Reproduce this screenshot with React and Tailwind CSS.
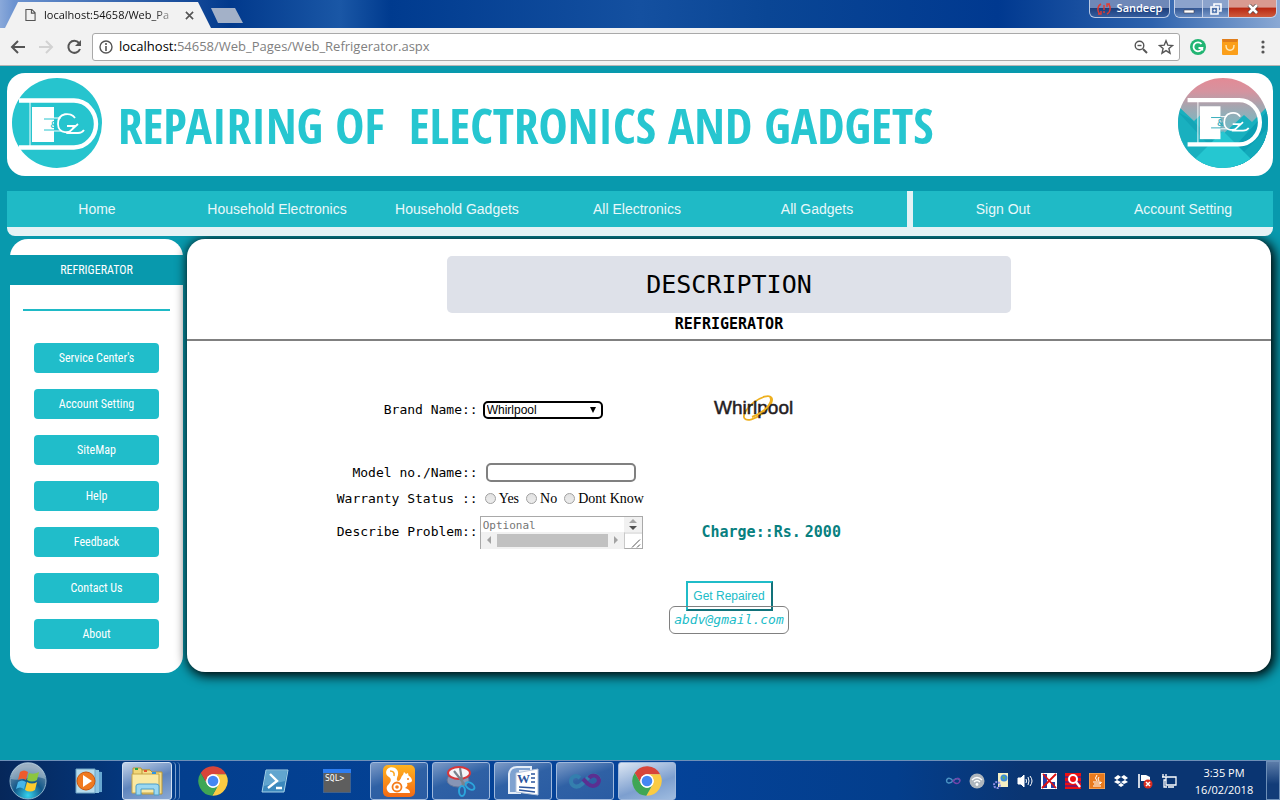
import React from "react";

const MONO = "font-['DejaVu_Sans_Mono',monospace]";
const UI = "font-['Open_Sans','Noto_Sans',sans-serif]";
const NARROW = "font-['Open_Sans_Condensed','DejaVu_Sans_Condensed',sans-serif]";
const SIDE = "font-['Roboto_Condensed','Open_Sans_Condensed','DejaVu_Sans_Condensed',sans-serif]";

function Chrome({ className }) {
  const sector = "M24 14H43.6A22 22 0 0 0 5.54 12.03L15.34 29A10 10 0 0 1 24 14Z";
  return (
    <svg viewBox="0 0 48 48" className={className} aria-hidden="true">
      <circle cx="24" cy="24" r="12" fill="#fff" />
      <path d={sector} fill="#d8453a" />
      <path d={sector} fill="#fbcb43" transform="rotate(120 24 24)" />
      <path d={sector} fill="#3fa655" transform="rotate(240 24 24)" />
      <circle cx="24" cy="24" r="10" fill="#fff" />
      <circle cx="24" cy="24" r="8" fill="#4587f3" />
    </svg>
  );
}

function Infinity({ className }) {
  return (
    <svg viewBox="0 0 32 20" className={className} fill="none" aria-hidden="true">
      <path d="M16 10C12 5 9 4 6 5C2 7 2 13 7 14C12 15 15 11 18 8C22 4 27 4 29 8" stroke="#4a93c4" strokeWidth="3" strokeLinecap="round" />
      <path d="M16 10C20 15 24 16 27 14C31 11 31 7 27 5C23 4 19 7 16 10" stroke="#7443a8" strokeWidth="3" strokeLinecap="round" />
    </svg>
  );
}

function LogoMark({ ground }) {
  return (
    <g>
      <path d="M7 22.5H62A22 23.5 0 0 1 62 69.5H7" fill="none" stroke="#fff" strokeWidth="4.4" />
      <path d="M18 22V69" stroke="#fff" strokeWidth="1" />
      <path d="M20 29H42V64H20Z" fill="#fff" />
      <path d="M32 41H43M32 52H43" stroke={ground} strokeWidth="1" />
      <path d="M42 40H49M42 53H49" stroke="#fff" strokeWidth="1" />
      <text x="38.5" y="50" fontSize="9" fontWeight="700" fill={ground} fontFamily="Lato, sans-serif">&amp;</text>
      <path d="M63 40C59 34 46 34 46 46C46 56 59 57 62 48H55M66 46L56 55H66Q70 55 72 52" fill="none" stroke="#fff" strokeWidth="1.8" />
    </g>
  );
}

function Logo() {
  return (
    <svg viewBox="0 0 90 90" className="size-[90px] shrink-0" role="img" aria-label="Electronics and gadgets">
      <circle cx="45" cy="45" r="45" fill="#26c4ce" />
      <LogoMark ground="#26c4ce" />
    </svg>
  );
}

function SceneLogo() {
  return (
    <svg viewBox="0 0 90 90" className="size-[90px] shrink-0" role="img" aria-label="Electronics and gadgets">
      <defs>
        <linearGradient id="sky" x1="0" y1="0" x2="0" y2="1">
          <stop offset="0" stopColor="#e38a95" />
          <stop offset=".15" stopColor="#d5939f" />
          <stop offset=".32" stopColor="#a4a6b0" />
          <stop offset=".5" stopColor="#7fb6c0" />
        </linearGradient>
        <clipPath id="disc"><circle cx="45" cy="45" r="45" /></clipPath>
      </defs>
      <g clipPath="url(#disc)">
        <path d="M0 0H90V90H0Z" fill="url(#sky)" />
        <path d="M0 28L16 43L28 32L45 56L66 37L74 44L90 28V90H0Z" fill="#19b0bf" />
        <path d="M90 32L48 78L62 90H90Z" fill="#0c9fb4" />
        <path d="M90 50L58 82L66 90H90Z" fill="#12a9ba" />
        <path d="M0 34L52 90H64L14 42Z" fill="#13a5b6" />
        <path d="M45 53L76 84L66 90H24L14 84Z" fill="#25c7d1" />
      </g>
      <g transform="translate(3 1) scale(.94)"><LogoMark ground="#2da9b8" /></g>
    </svg>
  );
}

function BrowserChrome() {
  return (
    <header className={`${UI} shrink-0`}>
      <div className="flex h-7 justify-between bg-[linear-gradient(90deg,#8aa9da_0px,#6c93d0_14px,#01398c_230px,#1a57a6_340px,#003b8f_390px,#1450a0_50%,#0a4695_60%,#003990_78%,#2d62ad_90%,#8ba9d4_100%)]">
        <div className="flex items-start gap-1">
          <div className="ml-[5px] mt-[2px] flex h-[26px] w-[206px] items-center bg-[#f2f2f2] pl-5 pr-4 [clip-path:polygon(0_100%,13px_0,193px_0,100%_100%)]">
            <svg viewBox="0 0 12 14" className="h-[14px] w-[11px] shrink-0" fill="none" stroke="#555" strokeWidth="1.2" aria-hidden="true">
              <path d="M1 1H7.5L11 4.5V13H1ZM7 1V5H11" />
            </svg>
            <span className="ml-2 w-[133px] shrink-0 whitespace-nowrap bg-[linear-gradient(90deg,#111_82%,#d8d8d8)] bg-clip-text text-[11px] text-transparent">localhost:54658/Web_Pa</span>
            <button aria-label="Close tab" className="ml-[6px] flex size-3 shrink-0 items-center justify-center">
              <svg viewBox="0 0 10 10" className="size-[9px]" stroke="#555" strokeWidth="1.8"><path d="M1 1L9 9M9 1L1 9" /></svg>
            </button>
          </div>
          <button aria-label="New tab" className="mt-2 h-[15px] w-8 -ml-1 bg-[#a3b1c8] [clip-path:polygon(0_0,24px_0,100%_100%,7px_100%)]" />
        </div>
        <div className="flex h-[18px] gap-1 pr-[3px]">
          <button className="flex w-[81px] items-center justify-center gap-[6px] rounded-b-md border border-t-0 border-[#b9c9e4] bg-[linear-gradient(#6e88b8_45%,#1d3f7c_50%,#355d9f)] text-[11px] font-semibold text-white">
            <svg viewBox="0 0 14 12" className="h-3 w-[14px]" fill="none" stroke="#e23b32" strokeWidth="1.4" aria-hidden="true">
              <path d="M4 1C0 3 0 9 3 11M1 11H4V8M10 11C14 9 14 3 11 1M13 1H10V4M7 2V7M7 8V10" />
            </svg>
            Sandeep
          </button>
          <div className="flex w-[103px] overflow-hidden rounded-b-md border border-t-0 border-[#c5d1e8]">
            <button aria-label="Minimize" className="flex w-7 items-center justify-center border-r border-[#c5d1e8] bg-[linear-gradient(#8ba3cc_45%,#365a96_50%,#6388bf)]">
              <svg viewBox="0 0 12 10" className="h-[10px] w-3"><path d="M1 6H11V9H1Z" fill="#fff" stroke="#445" strokeWidth=".6" /></svg>
            </button>
            <button aria-label="Restore" className="flex w-[26px] items-center justify-center border-r border-[#c5d1e8] bg-[linear-gradient(#8ba3cc_45%,#4a6da5_50%,#7898c9)]">
              <svg viewBox="0 0 12 12" className="size-3" fill="none" stroke="#fff" strokeWidth="1.6"><path d="M1 4H8V11H1ZM4 3V1H11V8H9" /><path d="M4 7H5V8H4Z" strokeWidth="1" /></svg>
            </button>
            <button aria-label="Close window" className="flex flex-1 items-center justify-center bg-[linear-gradient(#d99a90_40%,#b92a14_50%,#cf5b3c)]">
              <svg viewBox="0 0 12 10" className="h-[10px] w-3" fill="none"><path d="M2 1L10 9M10 1L2 9" stroke="#544" strokeWidth="4" /><path d="M2 1L10 9M10 1L2 9" stroke="#fff" strokeWidth="2.6" /></svg>
            </button>
          </div>
        </div>
      </div>
      <div className="flex h-[38px] items-center border-b border-[#b6b4b4] bg-[#f2f2f2] pl-2 pr-[11px]">
        <button aria-label="Back" className="mr-2"><svg viewBox="0 0 20 20" className="size-5" fill="none" stroke="#555" strokeWidth="2"><path d="M17 10H4M10 4L4 10L10 16" /></svg></button>
        <button aria-label="Forward" className="mr-2"><svg viewBox="0 0 20 20" className="size-5" fill="none" stroke="#d2d2d2" strokeWidth="2"><path d="M3 10H16M10 4L16 10L10 16" /></svg></button>
        <button aria-label="Reload" className="mr-2"><svg viewBox="0 0 20 20" className="size-5" fill="none" stroke="#555" strokeWidth="2"><path d="M15 6A6 6 0 1 0 16 12" /><path d="M17 3V9H11Z" fill="#555" stroke="none" /></svg></button>
        <div className="flex h-7 flex-1 items-center rounded-[3px] border border-[#a9a9a9] bg-white pl-[6px] pr-[5px]">
          <svg viewBox="0 0 14 14" className="size-[14px] shrink-0" fill="none" stroke="#555" strokeWidth="1.4" aria-hidden="true"><circle cx="7" cy="7" r="6" /><path d="M7 6V11M7 3V5" strokeWidth="1.6" /></svg>
          <p className="ml-[6px] flex-1 whitespace-nowrap text-[13px] text-[#808080]"><span className="text-black">localhost:</span>54658/Web_Pages/Web_Refrigerator.aspx</p>
          <button aria-label="Zoom" className="mr-[10px]"><svg viewBox="0 0 14 14" className="size-[14px]" fill="none" stroke="#555" strokeWidth="1.4"><circle cx="5.5" cy="5.5" r="4.3" /><path d="M9 9L13 13" strokeWidth="2" /><path d="M3.5 5.5H7.5" /></svg></button>
          <button aria-label="Bookmark"><svg viewBox="0 0 16 16" className="size-4" fill="none" stroke="#555" strokeWidth="1.4"><path d="M8 1.8L9.8 6.2L14.5 6.5L10.9 9.5L12 14.2L8 11.6L4 14.2L5.1 9.5L1.5 6.5L6.2 6.2Z" /></svg></button>
        </div>
        <button aria-label="Grammar extension" className="ml-[10px]">
          <svg viewBox="0 0 16 16" className="size-4"><circle cx="8" cy="8" r="8" fill="#22b573" /><path d="M11.5 5A4.5 4.5 0 1 0 12.3 9H8.5M12.3 9V11.5" fill="none" stroke="#fff" strokeWidth="1.8" /></svg>
        </button>
        <button aria-label="Shopping extension" className="ml-4">
          <svg viewBox="0 0 16 16" className="size-4"><rect width="16" height="16" rx="1" fill="#fb9f1a" /><path d="M0 0H16L15 3H1Z" fill="#e07d1b" /><path d="M4 6C4 13 12 13 12 6" fill="none" stroke="#ffe9b8" strokeWidth="1.4" /></svg>
        </button>
        <button aria-label="Menu" className="ml-[19px]"><svg viewBox="0 0 4 14" className="h-[14px] w-3" fill="#555"><circle cx="2" cy="2" r="1.6" /><circle cx="2" cy="7" r="1.6" /><circle cx="2" cy="12" r="1.6" /></svg></button>
      </div>
    </header>
  );
}

const navLink = "flex flex-1 items-center justify-center whitespace-nowrap";

function SiteNav() {
  return (
    <nav className="relative z-10 mt-[15px] rounded-b-lg bg-[#e4f2f5] pb-[9px] font-['Liberation_Sans',Arial,sans-serif] text-[14px] text-[#e8f8fa]">
      <div className="flex h-9 gap-[6px]">
        <div className="flex flex-[5] bg-[#1fbac6]">
          {["Home", "Household Electronics", "Household Gadgets", "All Electronics", "All Gadgets"].map((t) => (
            <a key={t} href="#" className={navLink}>{t}</a>
          ))}
        </div>
        <div className="flex flex-[2] bg-[#1fbac6]">
          {["Sign Out", "Account Setting"].map((t) => (
            <a key={t} href="#" className={navLink}>{t}</a>
          ))}
        </div>
      </div>
    </nav>
  );
}

function Sidebar() {
  return (
    <aside className={`${SIDE} w-[173px] shrink-0 rounded-[18px] bg-white pb-6 pt-4 text-[12px] text-white`}>
      <h2 className="flex h-[30px] items-center justify-center bg-[#0899ad]">REFRIGERATOR</h2>
      <hr className="mx-[13px] mt-6 border-t-2 border-[#1fbac6]" />
      <div className="mx-6 mt-8 flex flex-col gap-4">
        {["Service Center's", "Account Setting", "SiteMap", "Help", "Feedback", "Contact Us", "About"].map((t) => (
          <button key={t} className="h-[30px] rounded-sm bg-[#20bdca]">{t}</button>
        ))}
      </div>
    </aside>
  );
}

function WhirlpoolLogo() {
  return (
    <svg viewBox="0 2 84 30" className="h-[30px] w-[84px]" role="img" aria-label="Whirlpool">
      <ellipse cx="46" cy="15" rx="17" ry="7" transform="rotate(-38 46 15)" fill="none" stroke="#eeb01f" strokeWidth="1.8" />
      <text x="2" y="21" fontSize="19" fill="#25201f" stroke="#25201f" strokeWidth=".5" fontFamily="Liberation Sans, Arial, sans-serif">Whirlpool</text>
      <path d="M40 24C52 20 62 9 58 4" fill="none" stroke="#eeb01f" strokeWidth="2" />
    </svg>
  );
}

function ProblemBox() {
  return (
    <div className="grid h-[33px] w-[163px] grid-cols-[1fr_18px] grid-rows-[1fr_17px] border border-[#a9a9a9]">
      <textarea id="problem" placeholder="Optional" className={`${MONO} resize-none overflow-hidden pl-[2px] pt-[2px] text-[11px] leading-[14px] outline-none placeholder:text-[#757575]`} />
      <svg viewBox="0 0 18 15" className="h-[15px] w-[18px] bg-[#f1f1f1]" aria-hidden="true"><path d="M5 6L9 2L13 6Z" fill="#a3a3a3" /><path d="M5 9L9 13L13 9Z" fill="#505050" /></svg>
      <div className="flex items-center bg-[#f1f1f1]">
        <svg viewBox="0 0 16 16" className="size-4" aria-hidden="true"><path d="M10 4V12L6 8Z" fill="#a3a3a3" /></svg>
        <div className="h-[13px] flex-1 bg-[#c1c1c1]" />
        <svg viewBox="0 0 16 16" className="size-4" aria-hidden="true"><path d="M6 4V12L10 8Z" fill="#a3a3a3" /></svg>
      </div>
      <svg viewBox="0 0 18 16" className="h-[17px] w-[18px]" fill="none" aria-hidden="true"><path d="M.5 0V16M0 .5H18" stroke="#c9c9c9" /><path d="M8 15L16 7M13 15L16 12" stroke="#555" /></svg>
    </div>
  );
}

const row = "grid grid-cols-[27%_20%_1fr] items-center";
const label = "pr-[2px] text-right whitespace-nowrap";

function RepairForm() {
  return (
    <form onSubmit={(e) => e.preventDefault()} className={`${MONO} text-[13px] text-black`}>
      <div className={`${row} mt-[54px]`}>
        <label htmlFor="brand" className={label}>Brand Name::</label>
        <div className="relative ml-[3px] w-[120px] font-['Liberation_Sans',Arial,sans-serif]">
          <select id="brand" className="block h-[18px] w-full appearance-none rounded-[5px] border-2 border-black bg-white pl-[2px] text-[12px] leading-[14px]">
            <option>Whirlpool</option>
          </select>
          <svg viewBox="0 0 8 8" className="pointer-events-none absolute right-[6px] top-[5px] size-2" aria-hidden="true"><path d="M1 1H7L4 7Z" /></svg>
        </div>
        <div className="pl-4"><WhirlpoolLogo /></div>
      </div>
      <div className={`${row} mt-[38px]`}>
        <label htmlFor="model" className={label}>Model no./Name::</label>
        <input id="model" type="text" className="ml-[6px] h-[19px] w-[150px] rounded-[5px] border-2 border-[#808080] bg-white px-1 outline-none" />
      </div>
      <div className={`${row} mt-[6px]`}>
        <span className={label} id="warranty">Warranty Status ::</span>
        <div role="radiogroup" aria-labelledby="warranty" className="ml-[5px] flex items-center gap-[7px] whitespace-nowrap font-['Liberation_Serif',serif] text-[14px] leading-5">
          {["Yes", "No", "Dont Know"].map((t) => (
            <label key={t} className="flex items-center gap-[3px]">
              <input type="radio" name="warranty" className="size-[11px] appearance-none rounded-full border border-[#a0a0a0] bg-[linear-gradient(#e2e2e2,#ececec)] checked:bg-[#555]" />
              {t}
            </label>
          ))}
        </div>
      </div>
      <div className={`${row} mt-[7px]`}>
        <label htmlFor="problem" className={label}>Describe Problem::</label>
        <ProblemBox />
        <p className="flex gap-1 pl-[5px] text-[15px] font-bold text-[#08807f]"><span>Charge::Rs.</span><span>2000</span></p>
      </div>
      <div className="mt-8 flex flex-col items-center">
        <button className="h-[30px] w-[87px] whitespace-nowrap border-2 border-b-[#12727a] border-l-[#20bcc8] border-r-[#12727a] border-t-[#20bcc8] font-['Liberation_Sans',Arial,sans-serif] text-[12px] text-[#20bcc8]">Get Repaired</button>
        <p className="-mt-[5px] flex h-7 w-[120px] items-center justify-center rounded-md border border-[#808080] italic text-[#20bcc8]">abdv@gmail.com</p>
      </div>
    </form>
  );
}

function TaskButton({ label: name, active, children }) {
  return (
    <button aria-label={name} className={`flex h-[38px] w-[58px] items-center justify-center rounded-[3px] border border-[#9fb9dd] ${active ? "bg-[linear-gradient(160deg,#dce6f3,#7d9fcf_60%,#9fbce0)]" : "bg-[linear-gradient(160deg,#7d9bc7,#2f61a5_45%,#2a5ca3)]"}`}>
      {children}
    </button>
  );
}

function PinButton({ label: name, children }) {
  return <button aria-label={name} className="flex h-[38px] w-[58px] items-center justify-center">{children}</button>;
}

function Taskbar() {
  return (
    <footer className={`${UI} flex h-10 shrink-0 items-center justify-between border-t border-[#6d8fb8] bg-[linear-gradient(90deg,#06275a_0,#033f8e_14%,#04439a_50%,#033e8c_70%,#0a3572_80%,#0a3572_100%)] text-white`}>
      <div className="flex items-center gap-1">
        <button aria-label="Start" className="flex h-[38px] w-14 items-center justify-center">
          <svg viewBox="0 0 38 38" className="size-[38px]">
            <defs><radialGradient id="orb" cx=".5" cy=".9" r=".8"><stop offset="0" stopColor="#35d3ee" /><stop offset=".5" stopColor="#12588a" /><stop offset="1" stopColor="#708da8" /></radialGradient></defs>
            <circle cx="19" cy="19" r="18" fill="url(#orb)" stroke="#8eb3cc" />
            <path d="M2 17A17 17 0 0 1 36 17C26 12 12 20 2 17Z" fill="#fff" opacity=".3" />
            <path d="M11 10Q15 7 19 10L17 18Q13 15 9 18Z" fill="#ee5b2c" />
            <path d="M20 11Q25 13 30 10L28 18Q23 21 18 18Z" fill="#8cc63f" />
            <path d="M9 20Q13 17 17 20L15 27Q11 24 7 27Z" fill="#48b5e8" />
            <path d="M18 20Q23 23 28 20L26 28Q21 31 16 28Z" fill="#fccb2d" />
          </svg>
        </button>
        <PinButton label="Media player">
          <svg viewBox="0 0 28 26" className="h-[26px] w-7"><path d="M9 2L27 4V24L9 25Z" fill="#67a7d1" /><path d="M5 1L24 2V25H5Z" fill="#8fc5e3" /><path d="M1 1H20V25H1Z" fill="#b5dced" stroke="#6fa5c6" /><circle cx="11" cy="13" r="9" fill="#f07a20" stroke="#c95812" /><path d="M8 7L17 13L8 19Z" fill="#fff" /></svg>
        </PinButton>
        <div className="flex w-[58px]">
          <button aria-label="File explorer" className="flex h-[38px] w-[50px] items-center justify-center rounded-[3px] border border-[#d0dff2] bg-[linear-gradient(160deg,#c4d3e8,#5f85bd_50%,#8aa9d4)]">
            <svg viewBox="0 0 34 30" className="h-[30px] w-[34px]"><path d="M3 2H11L12 4H20V26H3Z" fill="#f1d677" stroke="#b79638" /><path d="M12 4H20L22 6H32V28H12Z" fill="#f3dd8b" stroke="#b79638" /><path d="M2 8H29V27H2Z" fill="#fae9a3" stroke="#c6a548" /><path d="M5 2H8V4H5Z" fill="#28a745" /><path d="M14 4H17V6H14Z" fill="#e4572e" /><path d="M22 6H26V8H22Z" fill="#2d94e2" /><path d="M6 29V20Q6 18 9 18H26Q29 18 29 20V29H24V23H11V29Z" fill="#9bd8f2" stroke="#4d9dc8" /></svg>
          </button>
          <span className="w-1 rounded-r border-r border-[#7c9fcd]" /><span className="w-1 rounded-r border-r border-[#5f86bb]" />
        </div>
        <PinButton label="Chrome"><Chrome className="size-8" /></PinButton>
        <PinButton label="PowerShell">
          <svg viewBox="0 0 28 24" className="h-6 w-7"><path d="M5 1H27L23 23H1Z" fill="#3b88bd" stroke="#a6d2e8" /><path d="M5 2H26L24 12L3 17Z" fill="#7bb9db" opacity=".6" /><path d="M9 5L16 12L7 19M15 19H21" fill="none" stroke="#fff" strokeWidth="2.4" /></svg>
        </PinButton>
        <PinButton label="SQL command line">
          <svg viewBox="0 0 28 24" className="h-6 w-7"><rect width="28" height="24" fill="#5e5e5e" stroke="#2465b8" /><rect width="28" height="4" fill="#2e7df0" /><text x="2" y="12" fontSize="8" fill="#fff" fontFamily="DejaVu Sans Mono, monospace">SQL&gt;</text></svg>
        </PinButton>
        <TaskButton label="UC Browser">
          <svg viewBox="0 0 32 32" className="size-8">
            <defs><linearGradient id="uc" x1="0" y1="0" x2="0" y2="1"><stop offset="0" stopColor="#ffb320" /><stop offset="1" stopColor="#f46a14" /></linearGradient></defs>
            <rect width="32" height="32" rx="5" fill="url(#uc)" />
            <path d="M11 28H7C3 26 3 22 5 20C8 17 9 14 6 12C2 10 2 4 7 2.500C12 1.500 16 5 15 10C14 13 13 15 15 16C18 16 18 11 20 10L21 7L23 9L25 8L25.500 10.500C28 12 29 14 29 16C28 18 26 17.500 24 18C25 20 24 22 22 23C25 24 27 25 27 28Z" fill="#fff" />
            <circle cx="14" cy="22" r="6" fill="#fff" /><circle cx="14" cy="22" r="4.500" fill="none" stroke="#f57c1a" strokeWidth="1.800" /><circle cx="14" cy="22" r="1.800" fill="#f57c1a" /><circle cx="25" cy="14" r="1" fill="#f57c1a" />
            <path d="M7 6Q12 6 11 11" fill="none" stroke="#fba51e" strokeWidth="1.500" />
          </svg>
        </TaskButton>
        <TaskButton label="Snipping tool">
          <svg viewBox="0 0 32 32" className="size-8" fill="none"><ellipse cx="13" cy="15" rx="11" ry="7" fill="#8795b5" stroke="#66779a" /><ellipse cx="14" cy="8" rx="11" ry="6" fill="#f4f4f7" stroke="#d8373a" strokeWidth="2" /><path d="M9 6L20 20M15 3L18 21" stroke="#7a828c" strokeWidth="2.2" /><ellipse cx="17" cy="26" rx="3" ry="5" stroke="#2ca5dc" strokeWidth="2" /><ellipse cx="25" cy="21" rx="5" ry="3" transform="rotate(35 25 21)" stroke="#2ca5dc" strokeWidth="2" /></svg>
        </TaskButton>
        <TaskButton label="Word">
          <svg viewBox="0 0 32 30" className="h-[30px] w-8"><path d="M2 27V8Q3 1 10 1H24V5H13V27Z" fill="#7fa2d0" stroke="#e4edf8" strokeWidth="2" /><path d="M9 7L31 3V29L9 26Z" fill="#fff" stroke="#b5c5dd" /><path d="M24 8H28M24 12H28M24 16H28M12 21L28 22M12 24L28 26" stroke="#2b559d" strokeWidth="1.6" /><text x="10" y="17" fontSize="13" fontWeight="700" fill="#2b559d" fontFamily="Liberation Serif, serif">W</text></svg>
        </TaskButton>
        <TaskButton label="Visual Studio">
          <svg viewBox="0 0 32 18" className="h-[18px] w-8" fill="none" aria-hidden="true">
            <path d="M11 6C7 2 2 5 2 9C2 14 8 17 13 12L20 5C25 1 30 4 30 8" stroke="#347fae" strokeWidth="4" />
            <path d="M14 7L19 12C24 16 30 13 30 8C29 3 23 2 20 6" stroke="#5b2f91" strokeWidth="4" />
          </svg>
        </TaskButton>
        <TaskButton label="Chrome window" active><Chrome className="size-8" /></TaskButton>
      </div>
      <div className="flex h-full items-center">
        <div className="flex items-center gap-2">
          <Infinity className="h-[10px] w-4" />
          <svg viewBox="0 0 16 16" className="size-4" fill="none"><circle cx="8" cy="8" r="7.5" fill="#aeb6bd" /><path d="M3 7Q8 2 13 7M5 9Q8 6 11 9" stroke="#fff" strokeWidth="1.4" /><circle cx="8" cy="11.5" r="1.4" fill="#fff" /></svg>
          <svg viewBox="0 0 16 16" className="size-4"><path d="M5 0H15V14H5Z" fill="#f5efc2" /><circle cx="11" cy="5" r="3.5" fill="#3a8ad8" /><path d="M9 3L12 4L11 7Z" fill="#67b346" /><circle cx="4" cy="12" r="3" fill="none" stroke="#8e8ee2" strokeWidth="2" strokeDasharray="2 1" /></svg>
          <svg viewBox="0 0 16 16" className="size-4" fill="none" stroke="#fff"><path d="M1 5H4L7 2V14L4 11H1Z" fill="#fff" /><path d="M9 6Q10 8 9 10M11 4Q13 8 11 12M13 3Q17 8 13 13" /></svg>
          <svg viewBox="0 0 16 16" className="size-4"><rect width="16" height="16" fill="#fff" /><path d="M2 1H6V15H2ZM10 9H14V15H10Z" fill="#2b3fa6" /><path d="M2 1L15 15M15 1L1 15" stroke="#d11" strokeWidth="1.8" /></svg>
          <svg viewBox="0 0 16 16" className="size-4"><rect width="16" height="16" fill="#ee1111" /><path d="M0 4H16M0 9H16M0 13H16" stroke="#1c1cb0" /><circle cx="8" cy="6" r="4" fill="#e11" stroke="#fff" strokeWidth="2" /><path d="M11 9L15 14" stroke="#fff" strokeWidth="2.4" /></svg>
          <svg viewBox="0 0 16 16" className="size-4"><rect width="16" height="16" rx="1" fill="#e87a1d" stroke="#ffc27d" /><path d="M8 2Q5 5 8 8M10 4Q8 6 10 8M4 9H11V11H5M4 13H12M11 9Q14 9 11 11" fill="none" stroke="#fff" /></svg>
          <svg viewBox="0 0 16 16" className="size-4" fill="#fff"><path d="M5 2L8 4L4 7L1 5ZM11 2L15 5L12 7L8 4ZM4 7L8 9L5 11L1 9ZM12 7L15 9L11 11L8 9ZM8 10L11 12L8 14L5 12Z" /></svg>
          <svg viewBox="0 0 16 16" className="size-4"><path d="M2 1V15" stroke="#fff" strokeWidth="1.6" /><path d="M4 2H9L13 4V9L9 8H4Z" fill="#fff" /><circle cx="11" cy="11" r="4.5" fill="#d92c20" /><path d="M9 9L13 13M13 9L9 13" stroke="#fff" strokeWidth="1.5" /></svg>
          <svg viewBox="0 0 16 16" className="size-4" fill="none" stroke="#fff" strokeWidth="1.3"><path d="M5 4H15V12H5ZM7 14H13M2 1V4M5 1V3M1 4H5V7H3V14H6" /></svg>
        </div>
        <div className="ml-[17px] w-[60px] whitespace-nowrap text-center text-[11px] leading-[17px]">
          <div>3:35 PM</div>
          <div>16/02/2018</div>
        </div>
        <button aria-label="Show desktop" className="ml-3 h-full w-[14px] border border-[#6d8fb8] bg-[linear-gradient(#5c7ca8,#123c78_60%)]" />
      </div>
    </footer>
  );
}

export default function App() {
  return (
    <div className="flex min-h-screen flex-col bg-[#0899ad]">
      <BrowserChrome />
      <div className="flex-1 px-[7px] pt-[7px]">
        <div className="flex h-[103px] items-start justify-between rounded-[18px] bg-white p-[5px]">
          <Logo />
          <h1 className={`${NARROW} ml-4 min-w-0 flex-1 self-center whitespace-pre text-[49px] font-bold leading-[56px] text-[#26c6d0]`}>REPAIRING OF  ELECTRONICS AND GADGETS</h1>
          <SceneLogo />
        </div>
        <SiteNav />
        <div className="mt-[3px] flex items-start gap-1 pl-[3px] pr-[2px]">
          <Sidebar />
          <main className="flex-1 rounded-[18px] bg-white pb-[38px] pt-[17px] shadow-[2px_2px_12px_2px_#000]">
            <div className={`${MONO} flex flex-col items-center border-b-2 border-[#808080] pb-[6px] text-black`}>
              <h2 className="flex h-[57px] w-[52%] items-center justify-center rounded-[5px] bg-[#dee1e9] text-[25px]">DESCRIPTION</h2>
              <h3 className="pt-[2px] text-[15px] font-bold leading-[18px]">REFRIGERATOR</h3>
            </div>
            <RepairForm />
          </main>
        </div>
      </div>
      <Taskbar />
    </div>
  );
}
